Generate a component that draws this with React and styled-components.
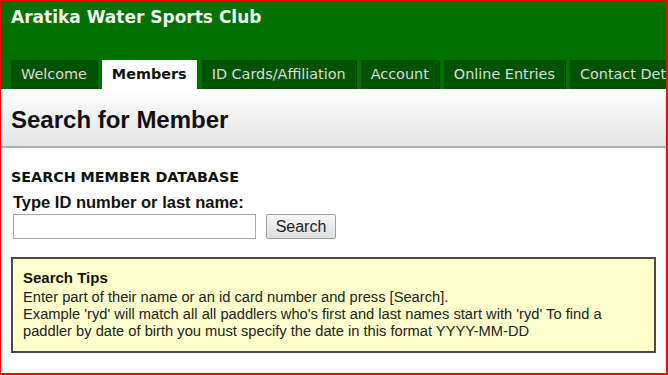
import React from "react";
import styled, { createGlobalStyle } from "styled-components";

const GlobalStyle = createGlobalStyle`
    html, body {
        margin: 0;
        padding: 0;
        background: #ffffff;
    }
`;

const tabs = ["Welcome", "Members", "ID Cards/Affiliation", "Account", "Online Entries", "Contact Details"];

const App = () => {
    return (
        <Frame>
            <GlobalStyle />
            <Header>
                <SiteTitle>Aratika Water Sports Club</SiteTitle>
                <Tabs>
                    {tabs.map((t) => (
                        <Tab key={t} active={t === "Members"}>{t}</Tab>
                    ))}
                </Tabs>
            </Header>

            <PageHead>
                <h1>Search for Member</h1>
            </PageHead>

            <Content>
                <SectionTitle>SEARCH MEMBER DATABASE</SectionTitle>
                <FieldLabel>Type ID number or last name:</FieldLabel>
                <SearchRow>
                    <SearchInput type="text" />
                    <SearchButton>Search</SearchButton>
                </SearchRow>

                <TipsBox>
                    <strong>Search Tips</strong>
                    <p>Enter part of their name or an id card number and press [Search].</p>
                    <p>Example 'ryd' will match all all paddlers who's first and last names start with 'ryd' To find a paddler by date of birth you must specify the date in this format YYYY-MM-DD</p>
                </TipsBox>
            </Content>
        </Frame>
    );
};

export default App;

const Frame = styled.div`
    box-sizing: border-box;
    width: 668px;
    height: 375px;
    overflow: hidden;
    border-top: 1px solid #ff0000;
    border-left: 1px solid #ff0000;
    border-right: 2px solid #ff0000;
    border-bottom: 2px solid #ff0000;
    background: #ffffff;
`;

const Header = styled.div`
    background: #007000;
    height: 88px;
    display: flex;
    flex-direction: column;
    justify-content: space-between;
    padding-left: 10px;
    box-sizing: border-box;
    overflow: hidden;
`;

const SiteTitle = styled.div`
    font-family: "DejaVu Sans", Verdana, sans-serif;
    font-weight: bold;
    font-size: 17px;
    color: #f4f4f4;
    padding-top: 5px;
    line-height: 22px;
`;

const Tabs = styled.div`
    display: flex;
    gap: 5px;
    white-space: nowrap;
`;

const Tab = styled.div`
    flex-shrink: 0;
    font-family: "DejaVu Sans", Verdana, sans-serif;
    font-size: 14.4px;
    font-weight: ${(p) => (p.active ? "bold" : "normal")};
    color: ${(p) => (p.active ? "#111111" : "#dcdcdc")};
    background: ${(p) => (p.active ? "#ffffff" : "#005300")};
    height: 29px;
    line-height: 29px;
    padding: 0 10px;
    box-shadow: ${(p) => (p.active ? "none" : "1px 1px 0 #003c00")};
`;

const PageHead = styled.div`
    height: 59px;
    box-sizing: border-box;
    padding: 17px 0 0 10px;
    background: linear-gradient(#ffffff 0%, #f6f6f6 30%, #e4e4e4 100%);
    border-bottom: 2px solid #b0b0b0;

    h1 {
        margin: 0;
        font-family: "Liberation Sans", Arial, sans-serif;
        font-size: 24px;
        font-weight: bold;
        color: #111111;
        line-height: 28px;
    }
`;

const Content = styled.div`
    padding: 21px 0 0 10px;
`;

const SectionTitle = styled.div`
    font-family: "DejaVu Sans", Verdana, sans-serif;
    font-size: 14.3px;
    font-weight: bold;
    color: #111111;
    line-height: 17px;
`;

const FieldLabel = styled.div`
    font-family: "Liberation Sans", Arial, sans-serif;
    font-size: 16.5px;
    font-weight: bold;
    color: #111111;
    line-height: 20px;
    margin: 6px 0 0 2px;
`;

const SearchRow = styled.div`
    display: flex;
    gap: 10px;
    margin: 2px 0 0 2px;
`;

const SearchInput = styled.input`
    box-sizing: border-box;
    width: 243px;
    height: 25px;
    border: 1px solid #a9a9a9;
    background: #ffffff;
    margin: 0;
`;

const SearchButton = styled.button`
    box-sizing: border-box;
    width: 70px;
    height: 25px;
    margin: 0;
    font-family: "Liberation Sans", Arial, sans-serif;
    font-size: 16px;
    color: #222222;
    border: 1px solid #a0a0a0;
    border-radius: 2px;
    background: linear-gradient(#f6f6f6, #dedede);
    padding: 0;
`;

const TipsBox = styled.div`
    box-sizing: border-box;
    width: 645px;
    height: 96px;
    margin-top: 18px;
    background: #ffffcc;
    border: 2px solid #4a4a4a;
    padding: 10px 12px 0 10px;
    font-family: "Liberation Sans", Arial, sans-serif;
    font-size: 14.7px;
    line-height: 17px;
    color: #222222;

    strong {
        display: block;
        font-size: 15px;
        color: #111111;
        margin-bottom: 3px;
    }

    p {
        margin: 0;
    }
`;
